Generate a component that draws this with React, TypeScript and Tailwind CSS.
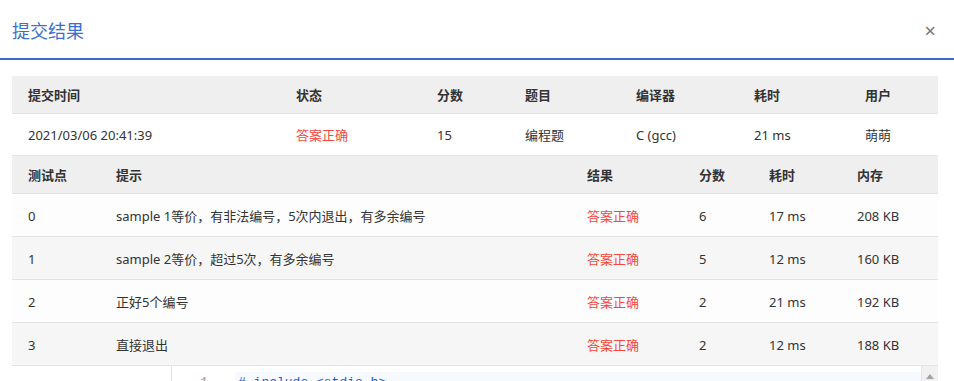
const FONT = '"Noto Sans", "Noto Sans CJK SC", sans-serif';

const summaryCols = ["w-[268px]", "w-[141px]", "w-[88px]", "w-[111px]", "w-[118px]", "w-[111px]", "flex-1"];
const caseCols = ["w-[88px]", "w-[471px]", "w-[112px]", "w-[70px]", "w-[88px]", "flex-1"];

const cases = [
  { id: "0", hint: "sample 1等价，有非法编号，5次内退出，有多余编号", score: "6", time: "17 ms", mem: "208 KB" },
  { id: "1", hint: "sample 2等价，超过5次，有多余编号", score: "5", time: "12 ms", mem: "160 KB" },
  { id: "2", hint: "正好5个编号", score: "2", time: "21 ms", mem: "192 KB" },
  { id: "3", hint: "直接退出", score: "2", time: "12 ms", mem: "188 KB" },
];

function HeadRow({ cols, labels }: { cols: string[]; labels: string[] }) {
  return (
    <div className="flex items-center h-[38px] pt-[3px] bg-[#efefef] border-b border-[#e3e3e3] text-[13px] font-bold text-[#333]">
      {labels.map((l, i) => (
        <div key={l} className={`${cols[i]} pl-4`}>
          {l}
        </div>
      ))}
    </div>
  );
}

export default function App() {
  return (
    <div className="w-[954px] h-[381px] overflow-hidden bg-white" style={{ fontFamily: FONT }}>
      {/* 标题栏 */}
      <div className="flex items-center justify-between h-[60px] pt-[3px] pl-3 pr-[18px] border-b-2 border-[#3a6bc8]">
        <span className="text-[18px] text-[#3d6fce] leading-none">提交结果</span>
        <span className="text-[20px] text-[#777] leading-none">×</span>
      </div>

      <div className="ml-3 mr-4 mt-4">
        {/* 提交概要 */}
        <HeadRow cols={summaryCols} labels={["提交时间", "状态", "分数", "题目", "编译器", "耗时", "用户"]} />
        <div className="flex items-center h-[42px] pt-[3px] border-b border-[#e3e3e3] text-[13px] text-[#333]">
          <div className={`${summaryCols[0]} pl-4`}>2021/03/06 20:41:39</div>
          <div className={`${summaryCols[1]} pl-4 text-[#f5473a]`}>答案正确</div>
          <div className={`${summaryCols[2]} pl-4`}>15</div>
          <div className={`${summaryCols[3]} pl-4`}>编程题</div>
          <div className={`${summaryCols[4]} pl-4`}>C (gcc)</div>
          <div className={`${summaryCols[5]} pl-4`}>21 ms</div>
          <div className={`${summaryCols[6]} pl-4`}>萌萌</div>
        </div>

        {/* 测试点 */}
        <HeadRow cols={caseCols} labels={["测试点", "提示", "结果", "分数", "耗时", "内存"]} />
        {cases.map((c, i) => (
          <div
            key={c.id}
            className={`flex items-center h-[43px] pt-[3px] border-b border-[#e3e3e3] text-[13px] text-[#333] ${
              i % 2 === 0 ? "bg-[#fdfdfd]" : "bg-[#f6f6f6]"
            }`}
          >
            <div className={`${caseCols[0]} pl-4`}>{c.id}</div>
            <div className={`${caseCols[1]} pl-4`}>{c.hint}</div>
            <div className={`${caseCols[2]} pl-4 text-[#f5473a]`}>答案正确</div>
            <div className={`${caseCols[3]} pl-4`}>{c.score}</div>
            <div className={`${caseCols[4]} pl-4`}>{c.time}</div>
            <div className={`${caseCols[5]} pl-4`}>{c.mem}</div>
          </div>
        ))}

        {/* 代码 */}
        <div className="flex h-[40px]">
          <div className="w-[159px] bg-white" />
          <div className="flex flex-1 border-l border-[#e3e3e3]">
            <div className="w-[63px] pr-[27px] pt-[8px] text-right text-[13px] leading-[18px] text-[#999] font-['Liberation_Mono',monospace]">
              1
            </div>
            <div className="flex-1 mt-[6px] bg-[#f6f9fd] pl-[3px] pt-[2px] text-[13px] leading-[18px] text-[#1a5fd0] font-['Liberation_Mono',monospace]">
              # include &lt;stdio.h&gt;
            </div>
            <div className="w-[17px] bg-[#f1f1f1] border-l border-[#e6e6e6] flex justify-center pt-[8px]">
              <svg width="8" height="5" viewBox="0 0 8 5">
                <path d="M0 5 L4 0 L8 5 Z" fill="#a3a3a3" />
              </svg>
            </div>
          </div>
        </div>
      </div>
    </div>
  );
}
